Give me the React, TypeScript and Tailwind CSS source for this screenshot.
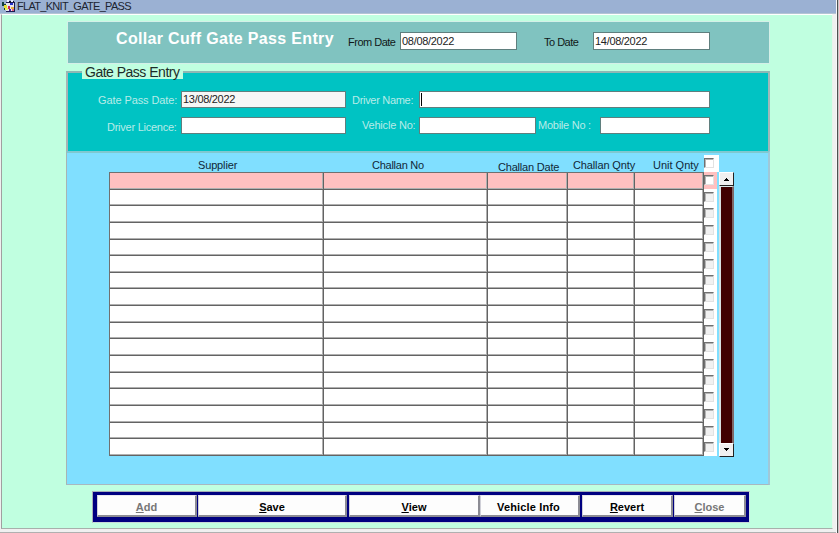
import React from "react";

const ROWS = Array.from({ length: 17 }, (_, i) => i);
const COLUMNS = ["w-[214px]", "w-[164px]", "w-[80px]", "w-[67px]", "w-[69px]"];

function Label({ className, children }: { className: string; children: React.ReactNode }) {
  return (
    <span className={`block shrink-0 whitespace-pre text-[11px] leading-[10px] ${className}`}>{children}</span>
  );
}

function Field({ className, value = "" }: { className: string; value?: string }) {
  return (
    <div
      className={`shrink-0 whitespace-pre border border-[#5f7f7e] pl-px text-[11px] leading-[15px] tracking-[-0.3px] text-[#222] ${className}`}
    >
      {value}
    </div>
  );
}

function Check({ active = false }: { active?: boolean }) {
  return (
    <span
      className={`block size-[10px] shrink-0 border border-t-[#707070] border-l-[#707070] border-r-[#e2e2e2] border-b-[#e2e2e2] shadow-[inset_1px_1px_0_#b4b4b4] ${active ? "bg-white" : "bg-[#f1f1f1]"}`}
    />
  );
}

function ScrollButton({ down = false }: { down?: boolean }) {
  return (
    <div className="flex h-[14px] w-[15px] shrink-0 items-center justify-center border border-t-white border-l-white border-r-[#222] border-b-[#222] bg-[#f0f0f0]">
      <svg width="7" height="4" viewBox="0 0 7 4" shapeRendering="crispEdges">
        <path d={down ? "M1 0h5v1H1zM2 1h3v1H2zM3 2h1v1H3z" : "M3 1h1v1H3zM2 2h3v1H2zM1 3h5v1H1z"} fill="#000" />
      </svg>
    </div>
  );
}

function Button({
  className,
  hot = "",
  text,
  disabled = false,
}: {
  className: string;
  hot?: string;
  text: string;
  disabled?: boolean;
}) {
  return (
    <div
      className={`flex h-[22px] shrink-0 items-center justify-center whitespace-pre border border-t-[#e8e8f0] border-l-[#d0d0d8] border-r-2 border-b-2 border-r-[#8c8c94] border-b-[#8c8c94] bg-[#fdfdfd] pt-[4px] text-[11px] leading-[13px] font-bold ${disabled ? "text-[#777]" : "text-black"} ${className}`}
    >
      <span className="underline underline-offset-1">{hot}</span>
      {text}
    </div>
  );
}

function AppIcon() {
  return (
    <svg width="15" height="13" viewBox="0 0 15 13" shapeRendering="crispEdges">
      <path d="M0 2h2v2h2v6H2V6H0z" fill="#123c3c" />
      <path d="M4 2h9v1H4zM12 3h1v9h-1zM4 11h8v1H4z" fill="#1c1c50" />
      <rect x="4" y="3" width="8" height="8" fill="#e8e4ee" />
      <path d="M5 0h2v2H5zM9 0h2v2H9z" fill="#eef" />
      <path d="M7 1h2v2H7zM11 1h1v1h-1z" fill="#101030" />
      <path d="M2 5h3v3H2z" fill="#e8e030" />
      <path d="M3 8h3v2H3z" fill="#f0f060" />
      <path d="M8 3h3v2H8z" fill="#2430c8" />
      <path d="M6 6h2v3H6z" fill="#d02850" />
      <path d="M9 7h3v2H9z" fill="#e8b040" />
      <path d="M7 9h2v2H7z" fill="#5020a0" />
      <path d="M10 9h2v2h-2z" fill="#e06080" />
    </svg>
  );
}

export default function App() {
  return (
    <div className="flex h-[533px] w-[839px] overflow-hidden bg-[#f0f0f0] font-['Liberation_Sans',Arial,sans-serif]">
      <div className="flex w-[836px] shrink-0 flex-col">
        <div className="flex h-[13px] shrink-0 bg-[#9bb1d3] pl-[2px]">
          <AppIcon />
          <Label className="mt-px tracking-[-0.7px] text-[#1c2430]">FLAT_KNIT_GATE_PASS</Label>
        </div>
        <div className="h-px shrink-0 bg-[#b4c4d4]" />
        <div className="ml-px flex h-[515px] w-[832px] shrink-0 flex-col border border-t-white border-r-[#e8f4ec] border-b-[#a8b0ac] border-l-[#a0a0a0] bg-[#c0ffe0] pl-[64px]">
          {/* Heading and date range */}
          <div className="mt-[6px] ml-px flex h-[43px] w-[703px] shrink-0 border border-[#d4f0e8] bg-[#80c3c0]">
            <h1 className="mt-[8px] ml-[48px] w-[232px] shrink-0 whitespace-pre text-[16px] leading-[18px] font-bold tracking-[0.33px] text-white">
              Collar Cuff Gate Pass Entry
            </h1>
            <Label className="mt-[15px] w-[52px] tracking-[-0.5px] text-[#101818]">From Date</Label>
            <Field className="mt-[10px] h-[18px] w-[117px] bg-white pt-px" value="08/08/2022" />
            <Label className="mt-[15px] ml-[27px] w-[49px] tracking-[-0.5px] text-[#101818]">To Date</Label>
            <Field className="mt-[10px] h-[18px] w-[117px] bg-white pt-px" value="14/08/2022" />
          </div>

          {/* Gate pass details */}
          <div className="relative mt-[7px] h-[80px] w-[704px] shrink-0 border-2 border-b-0 border-t-[#8fb8b4] border-r-[#a0b8b8] border-l-[#a8b4b4] bg-[#00c3c3] pt-[18px] text-[#b8ece8]">
            <span className="absolute -top-[7px] left-[14px] h-[13px] w-[101px] whitespace-pre bg-[#c0ffe0] pl-[3px] text-[14px] leading-[13px] tracking-[-0.5px] text-[#1c2c28]">
              Gate Pass Entry
            </span>
            <div className="flex h-[26px]">
              <Label className="mt-[4px] ml-[30px] w-[83px] tracking-[-0.1px]">Gate Pass Date:</Label>
              <Field className="h-[17px] w-[165px] bg-[#f6f6f6]" value="13/08/2022" />
              <Label className="mt-[4px] ml-[6px] w-[67px] tracking-[-0.3px]">Driver Name:</Label>
              <div className="flex h-[17px] w-[291px] shrink-0 border border-[#5f7f7e] bg-white py-px pl-px">
                <span className="w-px bg-black" />
              </div>
            </div>
            <div className="flex">
              <Label className="mt-[5px] ml-[39px] w-[74px] tracking-[-0.25px]">Driver Licence:</Label>
              <Field className="h-[17px] w-[165px] bg-white" />
              <Label className="mt-[3px] ml-[16px] w-[57px] tracking-[-0.2px]">Vehicle No:</Label>
              <Field className="h-[17px] w-[117px] bg-white" />
              <Label className="mt-[3px] ml-[2px] w-[62px] tracking-[-0.25px]">Mobile No :</Label>
              <Field className="h-[17px] w-[110px] bg-white" />
            </div>
          </div>

          {/* Challan table */}
          <div className="flex h-[334px] w-[704px] shrink-0 flex-col border border-t-2 border-r-2 border-t-[#80c8d0] border-r-[#a0c8d8] border-b-[#a8b8c0] border-l-[#a8b4b4] bg-[#80dfff] pl-[42px]">
            <div className="flex h-[19px] shrink-0 pt-[2px] text-[#102838]">
              <Label className="mt-[5px] ml-[89px] w-[174px] tracking-[-0.15px]">Supplier</Label>
              <Label className="mt-[5px] w-[126px] tracking-[-0.25px]">Challan No</Label>
              <Label className="mt-[7px] w-[75px] tracking-[-0.2px]">Challan Date</Label>
              <Label className="mt-[5px] w-[80px] tracking-[-0.13px]">Challan Qnty</Label>
              <Label className="mt-[5px] w-[51px]">Unit Qnty</Label>
              <div className="h-[17px] w-[15px] shrink-0 bg-white pt-[3px]">
                <Check active />
              </div>
            </div>
            <div className="flex h-[284px]">
              <div className="flex h-full w-[595px] shrink-0 flex-col border-t border-l border-[#707070]">
                {ROWS.map((row) => (
                  <div key={row} className="flex min-h-0 flex-1">
                    {COLUMNS.map((width) => (
                      <div
                        key={width}
                        className={`shrink-0 border-r border-b border-[#636363] shadow-[inset_-1px_-1px_0_#b0b0b0] ${width} ${row === 0 ? "bg-[#ffc0c0]" : "bg-white"}`}
                      />
                    ))}
                  </div>
                ))}
              </div>
              <div className="flex h-full w-[13px] shrink-0 flex-col">
                {ROWS.map((row) => (
                  <div key={row} className={`min-h-0 flex-1 pt-[3px] ${row === 0 ? "bg-[#ffc0c0]" : "bg-white"}`}>
                    <Check active={row === 0} />
                  </div>
                ))}
              </div>
              <div className="ml-[2px] flex h-[285px] w-[15px] shrink-0 flex-col">
                <ScrollButton />
                <div className="flex-1 border-t border-r-2 border-l-2 border-t-[#d8e8e8] border-r-[#806868] border-l-[#d8e0e0] bg-[#400000]" />
                <ScrollButton down />
              </div>
            </div>
          </div>

          {/* Action buttons */}
          <div className="mt-[6px] ml-[26px] flex h-[32px] w-[658px] shrink-0 border border-t-[#a8b0b8] border-r-[#d0e8e0] border-b-[#c8d8d8] border-l-[#a8b0b8] bg-[#000080] pt-[3px] pl-[4px]">
            <Button className="w-[100px]" hot="A" text="dd" disabled />
            <Button className="ml-px w-[149px]" hot="S" text="ave" />
            <Button className="ml-[2px] w-[131px]" hot="V" text="iew" />
            <Button className="w-[100px] pr-[2px] tracking-[0.15px]" text="Vehicle Info" />
            <Button className="ml-[2px] w-[91px]" hot="R" text="evert" />
            <Button className="ml-px w-[72px]" hot="C" text="lose" disabled />
          </div>
        </div>
        <div className="mt-[3px] h-px bg-[#b0b0b0]" />
      </div>
      <div className="w-px bg-[#f8f8f8]" />
      <div className="w-px bg-[#505050]" />
      <div className="w-px bg-[#c8c8c8]" />
    </div>
  );
}
